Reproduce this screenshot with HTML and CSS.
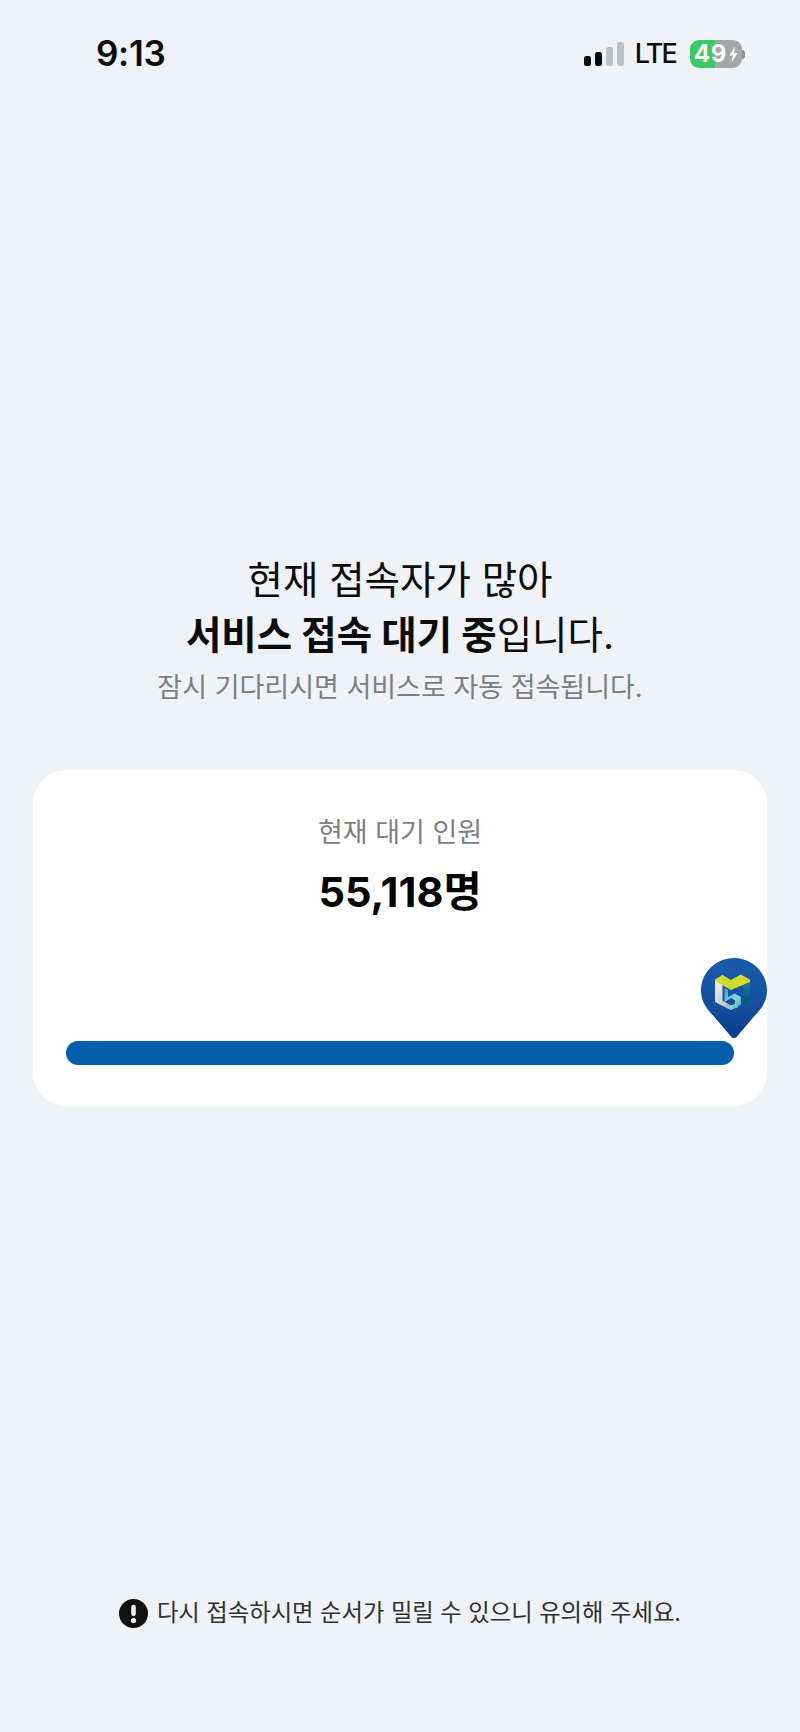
FILE: index.html
```
<!DOCTYPE html>
<html lang="ko">
<head>
<meta charset="utf-8">
<title>서비스 접속 대기</title>
<link rel="stylesheet" href="styles.css">
</head>
<body>
<div class="page">
  <header class="status">
    <span class="time">9:13</span>
    <div class="status-right">
      <div class="signal"><i class="b1"></i><i class="b2"></i><i class="b3"></i><i class="b4"></i></div>
      <span class="lte">LTE</span>
      <div class="battery">
        <div class="battery-body"><span class="battery-num">49</span><svg class="bolt" viewBox="0 0 10 18"><path d="M6.600 0 0.600 10.200h3.600L3 18l6.400-10.600H5.600z" fill="#fff"/></svg></div>
        <div class="battery-cap"></div>
      </div>
    </div>
  </header>
  <main class="main">
    <h1 class="title">현재 접속자가 많아<br><strong>서비스 접속 대기 중</strong>입니다.</h1>
    <p class="sub">잠시 기다리시면 서비스로 자동 접속됩니다.</p>
    <section class="card">
      <p class="card-label">현재 대기 인원</p>
      <p class="card-count">55,118명</p>
      <div class="track">
        <div class="bar"></div>
        <svg class="pin" viewBox="0 0 66 82">
          <defs>
            <linearGradient id="pinFill" x1="0" y1="0" x2="0" y2="1"><stop offset="0" stop-color="#1a5cab"/><stop offset="0.6" stop-color="#134f9f"/><stop offset="1" stop-color="#0a3c8a"/></linearGradient>
            <linearGradient id="mL" x1="0" y1="0" x2="1" y2="1"><stop offset="0" stop-color="#f3f4f6"/><stop offset="0.6" stop-color="#c6cbd3"/><stop offset="1" stop-color="#8f97a6"/></linearGradient>
            <linearGradient id="mT" x1="0" y1="0" x2="1" y2="1"><stop offset="0" stop-color="#3a9fc4"/><stop offset="0.6" stop-color="#85dbdf"/><stop offset="1" stop-color="#2e9ab5"/></linearGradient>
            <linearGradient id="mR" x1="0" y1="0" x2="0" y2="1"><stop offset="0" stop-color="#128390"/><stop offset="1" stop-color="#0b4a78"/></linearGradient>
          </defs>
          <path d="M33 0C15 0 0 14.500 0 32.500 0 44 6 51 13 58.500L30 78.500c1.600 2 4.400 2 6 0L53 58.500C60 51 66 44 66 32.500 66 14.500 51 0 33 0z" fill="url(#pinFill)"/>
          <path d="M14 21 21.500 25 21.500 42.500 29 47 36 47 38 49 29.500 52 14 44z" fill="url(#mL)"/>
          <path d="M23.500 29.500 27 32 27 39 33.500 35.500 40 39 40 46.500 30 52 27 50 34 45.500 34 42.500 30.500 40 23.500 44z" fill="url(#mT)"/>
          <path d="M42 28 49 24 49 43 42 47.500z" fill="url(#mR)"/>
          <path d="M14 21.500 21.500 17 30 22 39.500 16.500 49 21.500 49 24 30 32 14 23z" fill="#d3da2e"/>
        </svg>
      </div>
    </section>
    <div class="spacer"></div>
    <footer class="notice">
      <svg class="notice-icon" viewBox="0 0 28 28"><circle cx="14" cy="14" r="14" fill="#111"/><rect x="11.800" y="5.500" width="4.400" height="11" rx="2.200" fill="#eff3f8"/><circle cx="14" cy="20.800" r="2.500" fill="#eff3f8"/></svg>
      <span>다시 접속하시면 순서가 밀릴 수 있으니 유의해 주세요.</span>
    </footer>
  </main>
</div>
</body>
</html>
```
FILE: styles.css
```
* { box-sizing: border-box; }
html, body { margin: 0; padding: 0; }
body {
  background: #eff3f8;
  font-family: "Inter", "Noto Sans CJK KR", sans-serif;
  color: #111;
}
.page { height: 1732px; display: flex; flex-direction: column; overflow: hidden; }
.status {
  height: 106px;
  padding: 31px 55px 0 96px;
  display: flex;
  justify-content: space-between;
  align-items: flex-start;
}
.time { font-size: 35px; line-height: 44px; font-weight: 600; color: #0c0c0c; letter-spacing: -0.3px; }
.status-right { display: flex; align-items: center; gap: 12px; height: 44px; margin-top: 1px; }
.signal { display: flex; align-items: flex-end; gap: 4px; height: 24px; margin-right: -1px; }
.signal i { display: block; width: 7px; border-radius: 2.5px; background: #bfc3c7; }
.signal .b1 { height: 10px; background: #0c0c0c; }
.signal .b2 { height: 14px; background: #0c0c0c; }
.signal .b3 { height: 19px; }
.signal .b4 { height: 24px; }
.lte { font-size: 27px; line-height: 44px; font-weight: 500; color: #0c0c0c; letter-spacing: -1.800px; }
.battery { display: flex; align-items: center; margin-left: 2px; }
.battery-body {
  width: 52px; height: 28px; border-radius: 9px;
  background: linear-gradient(90deg, #3cc862 0 48%, #a4a7aa 48% 100%);
  display: flex; align-items: center; justify-content: center; gap: 2px;
}
.battery-num { font-size: 24px; line-height: 28px; font-weight: 700; color: #fff; letter-spacing: 0.5px; }
.bolt { width: 9px; height: 17px; }
.battery-cap { width: 3px; height: 9px; background: #8b8e92; border-radius: 0 3px 3px 0; }
.main { flex: 1; display: flex; flex-direction: column; align-items: center; padding: 447px 33px 101px; }
.title { margin: 0; font-size: 38.500px; line-height: 55px; font-weight: 400; text-align: center; color: #0c0c0c; }
.title strong { font-weight: 700; }
.sub { margin: 5px 0 0; font-size: 27px; line-height: 40px; color: #7b7f85; text-align: center; }
.card {
  width: 734px; height: 336px; margin-top: 62px;
  background: #fff; border-radius: 33px;
  display: flex; flex-direction: column; align-items: center;
  padding: 43px 33px 0;
}
.card-label { margin: 0; font-size: 27px; line-height: 40px; color: #7b7f85; }
.card-count { margin: 12px 0 0; font-size: 41.500px; line-height: 54px; font-weight: 700; color: #050505; }
.track { position: relative; width: 100%; margin-top: 122px; height: 24px; }
.bar { height: 24px; border-radius: 12px; background: #045eab; }
.pin { position: absolute; right: -33px; top: -83px; width: 66px; height: 82px; }
.spacer { flex: 1; }
.notice { display: flex; align-items: center; gap: 9px; font-size: 23.300px; line-height: 36px; color: #2e3033; }
.notice-icon { width: 29px; height: 29px; flex: none; }
```
